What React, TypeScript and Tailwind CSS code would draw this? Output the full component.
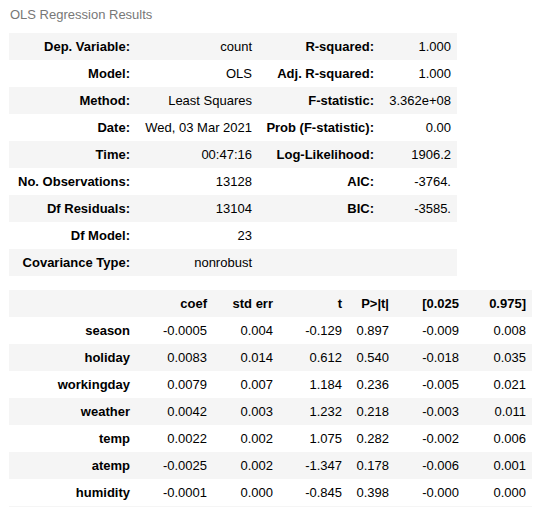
const info: [string, string, string, string][] = [
  ["Dep. Variable:", "count", "R-squared:", "1.000"],
  ["Model:", "OLS", "Adj. R-squared:", "1.000"],
  ["Method:", "Least Squares", "F-statistic:", "3.362e+08"],
  ["Date:", "Wed, 03 Mar 2021", "Prob (F-statistic):", "0.00"],
  ["Time:", "00:47:16", "Log-Likelihood:", "1906.2"],
  ["No. Observations:", "13128", "AIC:", "-3764."],
  ["Df Residuals:", "13104", "BIC:", "-3585."],
  ["Df Model:", "23", "", ""],
  ["Covariance Type:", "nonrobust", "", ""],
];

const coefs: string[][] = [
  ["season", "-0.0005", "0.004", "-0.129", "0.897", "-0.009", "0.008"],
  ["holiday", "0.0083", "0.014", "0.612", "0.540", "-0.018", "0.035"],
  ["workingday", "0.0079", "0.007", "1.184", "0.236", "-0.005", "0.021"],
  ["weather", "0.0042", "0.003", "1.232", "0.218", "-0.003", "0.011"],
  ["temp", "0.0022", "0.002", "1.075", "0.282", "-0.002", "0.006"],
  ["atemp", "-0.0025", "0.002", "-1.347", "0.178", "-0.006", "0.001"],
  ["humidity", "-0.0001", "0.000", "-0.845", "0.398", "-0.000", "0.000"],
];

const cell = "px-[6px] py-[6px] text-right leading-[15px] whitespace-nowrap";

export default function App() {
  return (
    <div
      className="min-h-screen bg-white pl-[9px] pt-[7px] text-[13px] text-black"
      style={{ fontFamily: '"Liberation Sans", Arial, sans-serif' }}
    >
      <div className="pl-px leading-[15px] text-[#777777]">OLS Regression Results</div>

      <table className="mt-[11px] table-fixed border-collapse">
        <colgroup>
          <col className="w-[127px]" />
          <col className="w-[122px]" />
          <col className="w-[122px]" />
          <col className="w-[77px]" />
        </colgroup>
        <tbody>
          {info.map((r, i) => (
            <tr key={i} className={i % 2 === 0 ? "bg-[#f5f5f5]" : "bg-white"}>
              <th className={cn(cell, "font-bold")}>{r[0]}</th>
              <td className={cell}>{r[1]}</td>
              <th className={cn(cell, "font-bold")}>{r[2]}</th>
              <td className={cell}>{r[3]}</td>
            </tr>
          ))}
        </tbody>
      </table>

      <table className="mt-[14px] table-fixed border-collapse">
        <colgroup>
          <col className="w-[127px]" />
          <col className="w-[77px]" />
          <col className="w-[66px]" />
          <col className="w-[69px]" />
          <col className="w-[47px]" />
          <col className="w-[70px]" />
          <col className="w-[67px]" />
        </colgroup>
        <tbody>
          <tr className="bg-[#f5f5f5]">
            <th className={cell}></th>
            {["coef", "std err", "t", "P>|t|", "[0.025", "0.975]"].map((h) => (
              <th key={h} className={cn(cell, "font-bold")}>
                {h}
              </th>
            ))}
          </tr>
          {coefs.map((r, i) => (
            <tr key={r[0]} className={i % 2 === 1 ? "bg-[#f5f5f5]" : "bg-white"}>
              <th className={cn(cell, "font-bold")}>{r[0]}</th>
              {r.slice(1).map((v, j) => (
                <td key={j} className={cell}>
                  {v}
                </td>
              ))}
            </tr>
          ))}
          {/* next row just peeks in at the bottom edge */}
          <tr className="h-[27px] bg-[#f5f5f5]">
            <td colSpan={7}></td>
          </tr>
        </tbody>
      </table>
    </div>
  );
}

function cn(...c: string[]) {
  return c.filter(Boolean).join(" ");
}
